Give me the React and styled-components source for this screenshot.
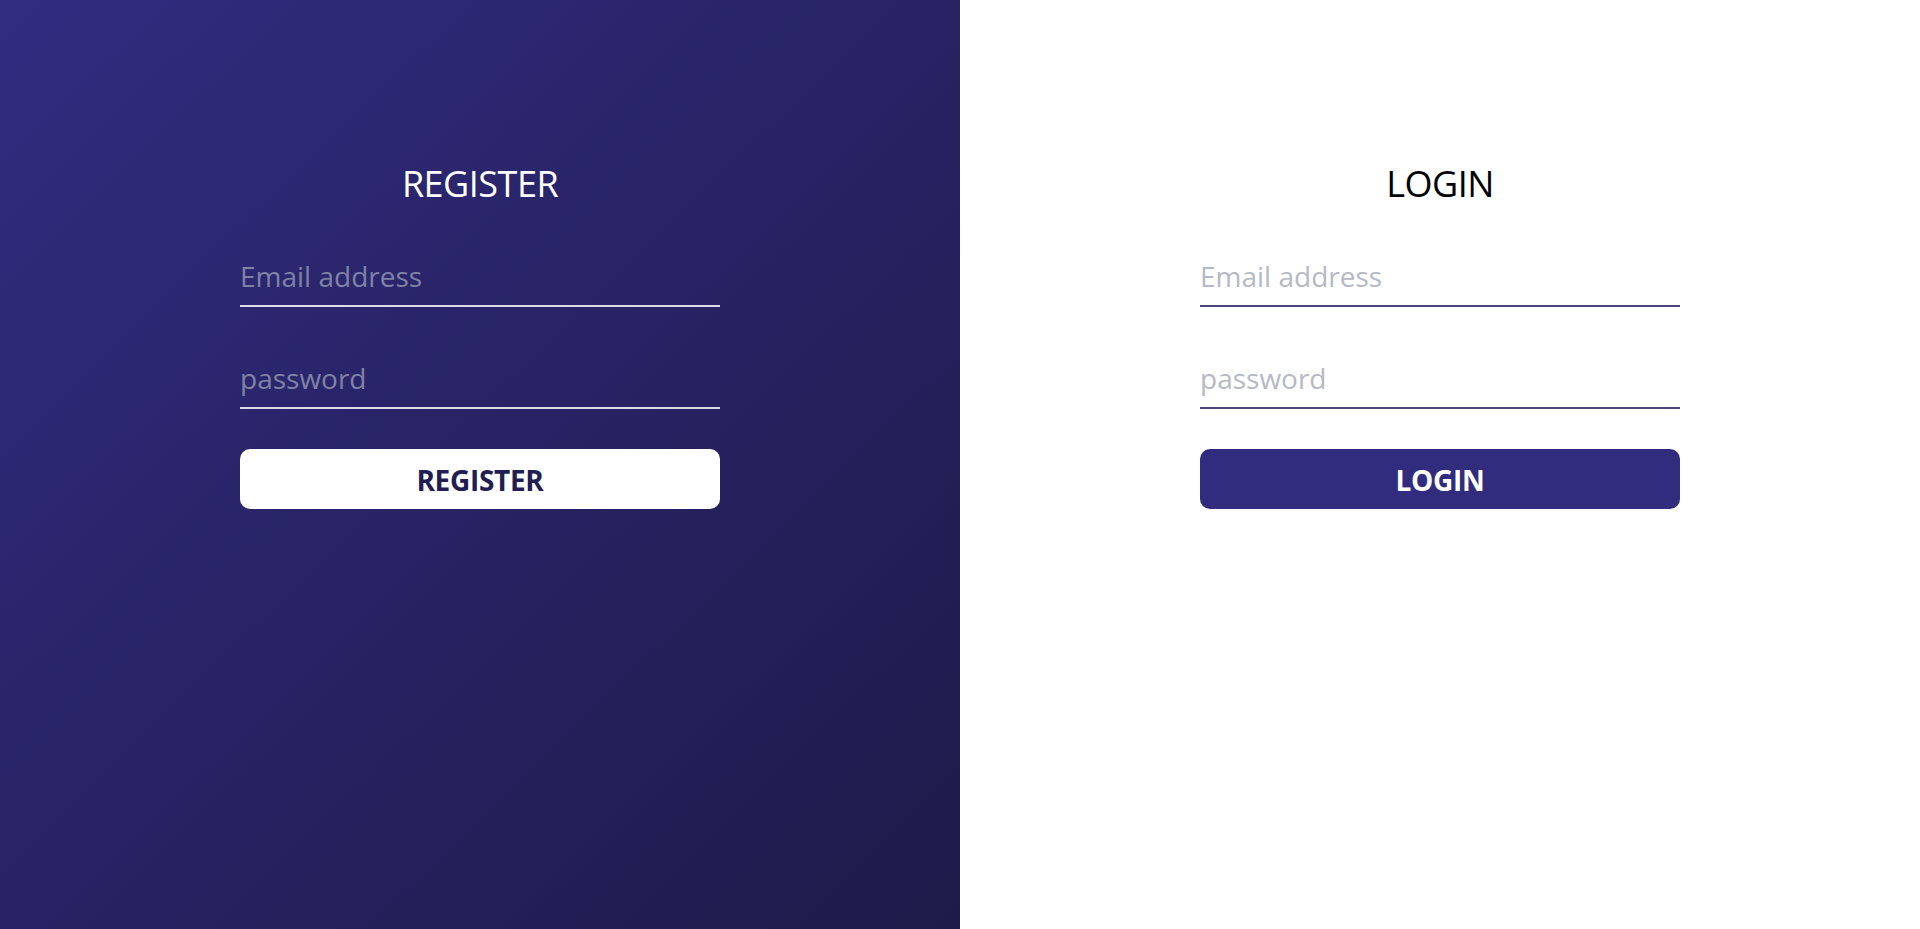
import React from 'react';
import styled, { createGlobalStyle } from 'styled-components';

// Reset the browser defaults and pick a sans font for the whole page
const GlobalStyle = createGlobalStyle`
  html, body {
    margin: 0;
    padding: 0;
    height: 100%;
  }
  body {
    font-family: "Open Sans", "Noto Sans", sans-serif;
  }
  #root {
    height: 100%;
  }
`;

// Two halves side by side
const Page = styled.div`
  display: grid;
  grid-template-columns: 1fr 1fr;
  height: 100vh;
  min-height: 929px;
`;

// One half of the page, dark or light
const Panel = styled.section`
  display: flex;
  justify-content: center;
  padding-top: 162px;
  background: ${p => (p.dark ? 'linear-gradient(to bottom right, #312c80, #1e1a49)' : '#ffffff')};
  color: ${p => (p.dark ? '#ffffff' : '#000000')};
`;

const Form = styled.form`
  display: flex;
  flex-direction: column;
  gap: 40px;
  width: 480px;
`;

const Title = styled.h2`
  margin: 0;
  font-size: 36px;
  font-weight: 400;
  line-height: 43px;
  text-align: center;
  letter-spacing: -0.5px;
`;

const Input = styled.input`
  box-sizing: border-box;
  width: 100%;
  height: 62px;
  padding: 1px 0 0;
  border: none;
  border-bottom: 2px solid ${p => (p.dark ? '#dcdbe8' : '#4b4879')};
  background: transparent;
  outline: none;
  font-family: inherit;
  font-size: 28px;
  color: ${p => (p.dark ? '#ffffff' : '#000000')};

  &::placeholder {
    color: ${p => (p.dark ? '#7f82a4' : '#b5b9c5')};
  }
`;

const Button = styled.button`
  height: 60px;
  padding: 2px 0 0;
  border: none;
  border-radius: 10px;
  background: ${p => (p.dark ? '#ffffff' : '#322c7f')};
  color: ${p => (p.dark ? '#221d52' : '#ffffff')};
  font-family: inherit;
  font-size: 28px;
  font-weight: 700;
  letter-spacing: -0.3px;
  cursor: pointer;
`;

function AuthForm({ title, dark }) {
  return (
    <Panel dark={dark}>
      <Form onSubmit={e => e.preventDefault()}>
        <Title>{title}</Title>
        <Input dark={dark} type="email" placeholder="Email address" />
        <Input dark={dark} type="password" placeholder="password" />
        <Button dark={dark} type="submit">{title}</Button>
      </Form>
    </Panel>
  );
}

export default function App() {
  return (
    <>
      <GlobalStyle />
      <Page>
        <AuthForm title="REGISTER" dark />
        <AuthForm title="LOGIN" />
      </Page>
    </>
  );
}
